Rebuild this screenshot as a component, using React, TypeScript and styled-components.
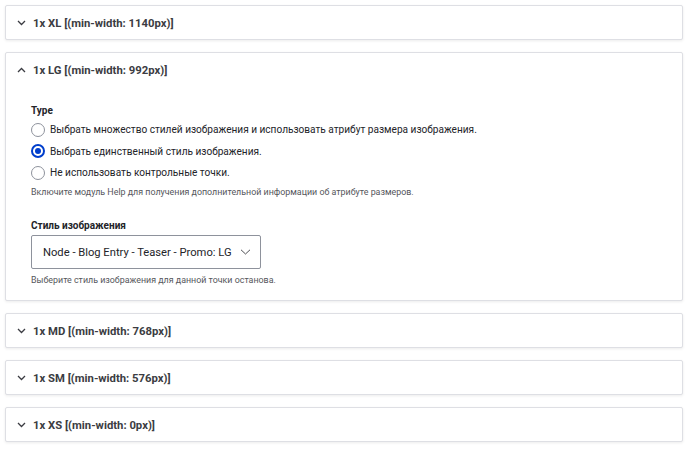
import styled, { createGlobalStyle } from "styled-components";

const Global = createGlobalStyle`
  body {
    margin: 0;
    background: #fff;
    font-family: Roboto, "Liberation Sans", sans-serif;
    color: #232429;
  }
`;

const Page = styled.div`
  display: flex;
  flex-direction: column;
  gap: 12px;
  padding: 5px 9px 10px 5px;
`;

const Panel = styled.div`
  border: 1px solid #dedfe4;
  border-radius: 2px;
  background: #fff;
  box-shadow: 0 1px 3px rgba(0, 0, 0, 0.08);
`;

const Summary = styled.div`
  display: flex;
  align-items: center;
  gap: 7px;
  height: 33px;
  padding: 1px 0 0 11px;
  box-sizing: border-box;
  font-size: 11.3px;
  font-weight: 700;
  color: #3b3c42;
`;

const Body = styled.div`
  padding: 17px 25px 13px 25px;
`;

const Label = styled.div`
  font-size: 10px;
  font-weight: 700;
  line-height: 16px;
`;

const RadioRow = styled.label`
  display: flex;
  align-items: center;
  gap: 5px;
  height: 21.5px;
  font-size: 10.1px;
`;

const Radio = styled.span<{ $on?: boolean }>`
  box-sizing: border-box;
  width: 14px;
  height: 14px;
  border-radius: 50%;
  border: ${(p) => (p.$on ? "2px solid #003ecc" : "1px solid #8e929c")};
  display: flex;
  align-items: center;
  justify-content: center;
  &::after {
    content: "";
    display: ${(p) => (p.$on ? "block" : "none")};
    width: 6px;
    height: 6px;
    border-radius: 50%;
    background: #003ecc;
  }
`;

const Help = styled.div<{ $top: number }>`
  margin-top: ${(p) => p.$top}px;
  font-size: 8.9px;
  line-height: 14px;
  color: #55565b;
`;

const Field = styled.div`
  margin-top: 19px;
  display: flex;
  flex-direction: column;
  align-items: flex-start;
`;

const Select = styled.div`
  box-sizing: border-box;
  margin-top: 1px;
  width: 230px;
  height: 34px;
  border: 1px solid #8e929c;
  border-radius: 2px;
  display: flex;
  align-items: center;
  justify-content: space-between;
  padding: 0 9px 0 11px;
  font-size: 11.2px;
  white-space: nowrap;
  color: #232429;
`;

const Chevron = ({ up }: { up?: boolean }) => (
  <svg width="9" height="6" viewBox="0 0 9 6" fill="none">
    <path
      d={up ? "M1 5 L4.5 1.5 L8 5" : "M1 1 L4.5 4.5 L8 1"}
      stroke="#3b3c42"
      strokeWidth="1.3"
    />
  </svg>
);

const Head = ({ title, up }: { title: string; up?: boolean }) => (
  <Summary>
    <Chevron up={up} />
    {title}
  </Summary>
);

export default function App() {
  return (
    <>
      <Global />
      <Page>
        <Panel>
          <Head title="1x XL [(min-width: 1140px)]" />
        </Panel>
        <Panel>
          <Head title="1x LG [(min-width: 992px)]" up />
          <Body>
            <Label>Type</Label>
            <RadioRow>
              <Radio />
              Выбрать множество стилей изображения и использовать атрибут размера изображения.
            </RadioRow>
            <RadioRow>
              <Radio $on />
              Выбрать единственный стиль изображения.
            </RadioRow>
            <RadioRow>
              <Radio />
              Не использовать контрольные точки.
            </RadioRow>
            <Help $top={1.5}>
              Включите модуль Help для получения дополнительной информации об атрибуте размеров.
            </Help>
            <Field>
              <Label>Стиль изображения</Label>
              <Select>
                Node - Blog Entry - Teaser - Promo: LG
                <svg width="11" height="6" viewBox="0 0 11 6" fill="none">
                  <path d="M1 0.8 L5.5 5 L10 0.8" stroke="#3b3c42" strokeWidth="0.9" />
                </svg>
              </Select>
              <Help $top={4}>Выберите стиль изображения для данной точки останова.</Help>
            </Field>
          </Body>
        </Panel>
        <Panel>
          <Head title="1x MD [(min-width: 768px)]" />
        </Panel>
        <Panel>
          <Head title="1x SM [(min-width: 576px)]" />
        </Panel>
        <Panel>
          <Head title="1x XS [(min-width: 0px)]" />
        </Panel>
      </Page>
    </>
  );
}
